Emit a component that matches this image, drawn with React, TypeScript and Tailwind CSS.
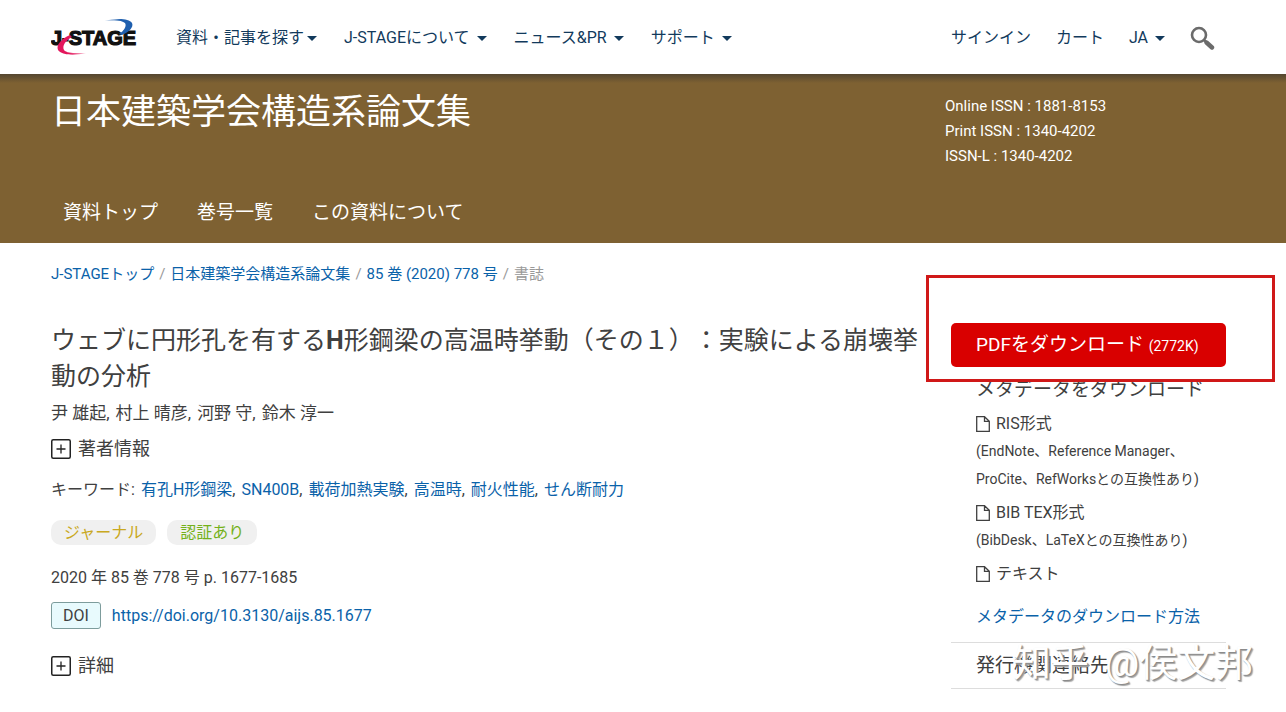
const mainMenu = [
  { label: "資料・記事を探す", gap: "gap-[3px]" },
  { label: "J-STAGEについて", gap: "gap-[7px]" },
  { label: "ニュース&PR", gap: "gap-[7px]" },
  { label: "サポート", gap: "gap-[7px]" },
];

const journalTabs = ["資料トップ", "巻号一覧", "この資料について"];

const issns = [
  "Online ISSN : 1881-8153",
  "Print ISSN : 1340-4202",
  "ISSN-L : 1340-4202",
];

const breadcrumbs = ["J-STAGEトップ", "日本建築学会構造系論文集", "85 巻 (2020) 778 号"];

const authors = ["尹 雄起,", "村上 晴彦,", "河野 守,", "鈴木 淳一"];

const keywords = ["有孔H形鋼梁", "SN400B", "載荷加熱実験", "高温時", "耐火性能", "せん断耐力"];

function Caret() {
  return (
    <svg width="10" height="5" viewBox="0 0 10 5" fill="currentColor" aria-hidden="true">
      <path d="M0 0h10L5 5z" />
    </svg>
  );
}

function Logo() {
  return (
    <svg width="90" height="40" viewBox="0 0 90 40" role="img" aria-label="J-STAGE">
      <defs>
        <linearGradient id="blue" x1="0" x2="1">
          <stop offset="0" stopColor="#1f5fae" stopOpacity="0.1" />
          <stop offset="0.6" stopColor="#1f5fae" />
        </linearGradient>
        <linearGradient id="red" x1="0" x2="1">
          <stop offset="0.4" stopColor="#e3175c" />
          <stop offset="1" stopColor="#e3175c" stopOpacity="0.2" />
        </linearGradient>
      </defs>
      <text
        x="0"
        y="27"
        className="font-['Liberation_Sans'] text-[20px] font-bold"
        fill="#111"
        stroke="#111"
        strokeWidth="1.2"
      >
        J-STAGE
      </text>
      <path d="M53 3C64 0 78 0 81 5c2 4-3 9-10 12l-3-1c5-3 8-8 6-11-3-3-11-3-21-2z" fill="url(#blue)" />
      <path d="M19 17C10 21 5 27 7 32c3 5 16 6 28 3-8 0-19 1-22-3-2-4 1-9 8-13z" fill="url(#red)" />
    </svg>
  );
}

function SearchIcon() {
  return (
    <svg width="25" height="25" viewBox="0 0 25 25" fill="none" stroke="#6b6b6b" aria-hidden="true">
      <circle cx="9" cy="9" r="7" strokeWidth="2.6" />
      <path d="M14 14l2.5 2.2" strokeWidth="2.5" />
      <path d="M16.5 16.5l5.5 5" strokeWidth="4.4" strokeLinecap="round" />
    </svg>
  );
}

function FileIcon() {
  return (
    <svg width="14" height="16" viewBox="0 0 14 16" fill="none" stroke="#404040" strokeWidth="1.3" aria-hidden="true">
      <path d="M0.7 0.7h7.8l4.8 4.6v10H0.7zM8.5 0.7v4.6h4.8" />
    </svg>
  );
}

function Expander({ label }: { label: string }) {
  return (
    <button type="button" className="flex items-center gap-[7px] text-[18px] leading-6">
      <svg width="20" height="20" viewBox="0 0 20 20" fill="none" stroke="#222" aria-hidden="true">
        <rect x="0.75" y="0.75" width="18.5" height="18.5" rx="1.5" strokeWidth="1.5" />
        <path d="M10 5.5v9M5.5 10h9" strokeWidth="1.3" />
      </svg>
      {label}
    </button>
  );
}

function Format({ name, note }: { name: string; note?: string }) {
  return (
    <li>
      <a href="#" className="flex items-center gap-[6px] text-[16px] leading-[26px]">
        <FileIcon />
        {name}
      </a>
      {note && <p className="text-[14px] leading-7 whitespace-pre-line">{note}</p>}
    </li>
  );
}

export default function App() {
  return (
    <div className="bg-white font-[Roboto,'Noto_Sans_CJK_JP',sans-serif] text-[#404040]" lang="ja">
      <header className="flex h-[74px] items-center pt-[2px] pr-[71px] pl-[51px] text-[16px] text-[#123a5c]">
        <a href="#">
          <Logo />
        </a>
        <nav className="ml-[35px] flex gap-[27px]">
          {mainMenu.map((item) => (
            <button key={item.label} type="button" className={`flex items-center ${item.gap}`}>
              {item.label}
              <Caret />
            </button>
          ))}
        </nav>
        <div className="ml-auto flex items-center gap-[25px]">
          <a href="#">サインイン</a>
          <a href="#">カート</a>
          <button type="button" className="flex items-center gap-[7px]">
            JA
            <Caret />
          </button>
          <button type="button" aria-label="検索">
            <SearchIcon />
          </button>
        </div>
      </header>

      <div className="bg-[linear-gradient(#544630,#7e6132_9px)] px-[51px] text-white">
        <div className="flex h-[118px] justify-between pt-[14px]">
          <h2 className="text-[35px] leading-[50px]">日本建築学会構造系論文集</h2>
          <ul className="w-[290px] pt-[6px] text-[15px] leading-[25px]">
            {issns.map((issn) => (
              <li key={issn}>{issn}</li>
            ))}
          </ul>
        </div>
        <nav className="flex h-[51px] gap-[39px] px-3 pt-[7px] text-[19px] leading-7">
          {journalTabs.map((tab) => (
            <a key={tab} href="#">
              {tab}
            </a>
          ))}
        </nav>
      </div>

      <nav className="px-[51px] pt-[19px] text-[15px] leading-6 text-[#999]">
        {breadcrumbs.map((crumb) => (
          <span key={crumb}>
            <a href="#" className="text-[#0a62a9]">
              {crumb}
            </a>
            <span className="px-[5px]">/</span>
          </span>
        ))}
        書誌
      </nav>

      <div className="flex justify-between pr-[60px] pl-[51px]">
        <main className="w-[870px] pt-[37px]">
          <h1 className="text-[25px] leading-9 [text-spacing-trim:space-all]">
            ウェブに円形孔を有する<b>H</b>形鋼梁の高温時挙動（その１）：実験による崩壊挙動の分析
          </h1>
          <p className="flex gap-[6px] pt-[6px] text-[17px] leading-6">
            {authors.map((author) => (
              <span key={author}>{author}</span>
            ))}
          </p>
          <div className="pt-3">
            <Expander label="著者情報" />
          </div>
          <p className="flex gap-[6px] pt-[17px] text-[16px] leading-6">
            キーワード:
            {keywords.map((keyword, i) => (
              <span key={keyword}>
                <a href="#" className="text-[#0a62a9]">
                  {keyword}
                </a>
                {i < keywords.length - 1 && ","}
              </span>
            ))}
          </p>
          <div className="flex gap-[11px] pt-[18px] text-[16px] leading-[25px]">
            <span className="rounded-[10px] bg-[#f0f0f0] px-[13px] text-[#c9a820]">ジャーナル</span>
            <span className="rounded-[10px] bg-[#f0f0f0] px-[13px] text-[#74b11a]">認証あり</span>
          </div>
          <p className="pt-[21px] text-[16px] leading-6">2020 年 85 巻 778 号 p. 1677-1685</p>
          <div className="flex items-center gap-[11px] pt-3 text-[16px] leading-[25px]">
            <span className="rounded-[3px] border border-[#7d9c9c] bg-[#e8fafd] px-[11px]">DOI</span>
            <a href="#" className="text-[#0a62a9]">
              https://doi.org/10.3130/aijs.85.1677
            </a>
          </div>
          <div className="pt-[25px]">
            <Expander label="詳細" />
          </div>
        </main>

        <aside className="relative w-[275px] pt-[37px]">
          <button
            type="button"
            className="block h-11 w-full rounded-[5px] bg-[#d90000] pl-[25px] text-left text-[19px] text-white"
          >
            PDFをダウンロード <span className="text-[14px]">(2772K)</span>
          </button>
          <h2 className="pt-[9px] pl-[25px] text-[19px] leading-7">メタデータをダウンロード</h2>
          <ul className="space-y-[7px] pt-[7px] pl-[25px]">
            <Format name="RIS形式" note={"(EndNote、Reference Manager、\nProCite、RefWorksとの互換性あり)"} />
            <Format name="BIB TEX形式" note="(BibDesk、LaTeXとの互換性あり)" />
            <Format name="テキスト" />
          </ul>
          <a href="#" className="block pt-4 pl-[25px] text-[16px] leading-7 text-[#0a62a9]">
            メタデータのダウンロード方法
          </a>
          <div className="relative mt-[11px] border-y border-[#ddd] pl-[25px] text-[19px] leading-[45px]">
            発行機関連絡先
            <span className="absolute top-0 left-[62px] flex gap-4 text-[38px] leading-10 whitespace-nowrap text-white [text-shadow:1px_1px_1px_#888,2px_2px_1px_#aaa]">
              <span>知乎</span>
              <span>@侯文邦</span>
            </span>
          </div>
          <div className="absolute -top-[11px] -right-[49px] -left-[25px] h-[107px] border-[3px] border-[#d01818]" />
        </aside>
      </div>
    </div>
  );
}
